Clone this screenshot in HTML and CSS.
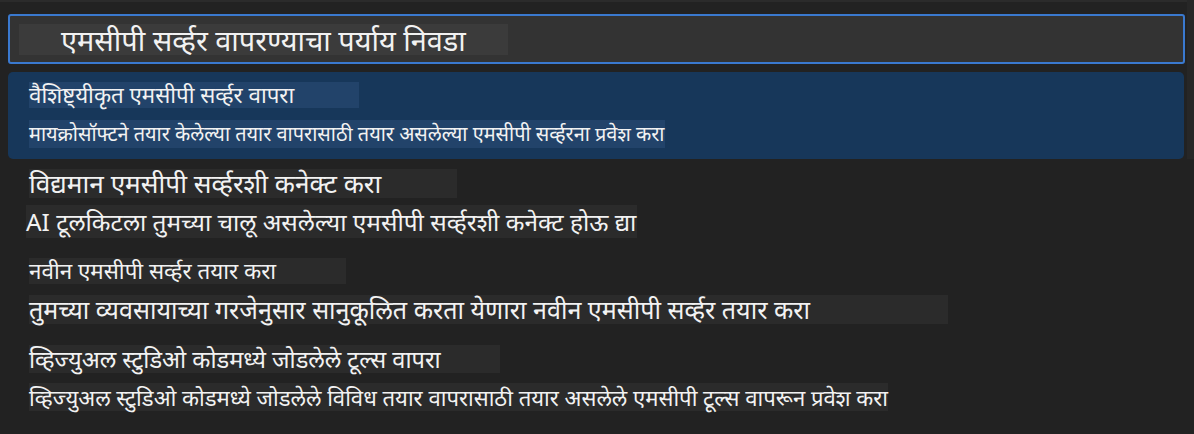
FILE: index.html
```html
<!DOCTYPE html>
<html lang="mr">
<head>
<meta charset="utf-8">
<title>एमसीपी सर्व्हर</title>
<link rel="stylesheet" href="styles.css">
</head>
<body>
<div class="panel">
  <div class="scroll-thumb"></div>
  <div class="input">
    <span class="hl hl-input">एमसीपी सर्व्हर वापरण्याचा पर्याय निवडा</span>
  </div>
  <ul class="list">
    <li class="item item-1 selected">
      <span class="line t1">वैशिष्ट्यीकृत एमसीपी सर्व्हर वापरा</span>
      <span class="line d1">मायक्रोसॉफ्टने तयार केलेल्या तयार वापरासाठी तयार असलेल्या एमसीपी सर्व्हरना प्रवेश करा</span>
    </li>
    <li class="item item-2">
      <span class="line t2">विद्यमान एमसीपी सर्व्हरशी कनेक्ट करा</span>
      <span class="line d2">AI टूलकिटला तुमच्या चालू असलेल्या एमसीपी सर्व्हरशी कनेक्ट होऊ द्या</span>
    </li>
    <li class="item item-3">
      <span class="line t3">नवीन एमसीपी सर्व्हर तयार करा</span>
      <span class="line d3">तुमच्या व्यवसायाच्या गरजेनुसार सानुकूलित करता येणारा नवीन एमसीपी सर्व्हर तयार करा</span>
    </li>
    <li class="item item-4">
      <span class="line t4">व्हिज्युअल स्टुडिओ कोडमध्ये जोडलेले टूल्स वापरा</span>
      <span class="line d4">व्हिज्युअल स्टुडिओ कोडमध्ये जोडलेले विविध तयार वापरासाठी तयार असलेले एमसीपी टूल्स वापरून प्रवेश करा</span>
    </li>
  </ul>
</div>
</body>
</html>
```
FILE: styles.css
```css
* { box-sizing: border-box; }
html, body {
  margin: 0;
  padding: 0;
  background: #222222;
}
body {
  font-family: "Noto Sans", "DejaVu Sans", sans-serif;
  color: #f2f2f2;
  width: 1194px;
  height: 434px;
  overflow: hidden;
}
.panel {
  position: relative;
  height: 434px;
  border-top: 2px solid #2b2b2b;
  padding: 12px 0 0 8px;
}
.scroll-thumb {
  position: absolute;
  top: -2px;
  right: 0;
  width: 7px;
  height: 159px;
  background: #272727;
}
.input {
  width: 1177px;
  height: 50px;
  border: 2px solid #3a79cf;
  border-radius: 3px;
  background: #333333;
  padding: 8px 0 0 9px;
}
.hl {
  display: block;
  white-space: nowrap;
}
.hl-input {
  width: 489px;
  height: 31px;
  background: #3b3b3b;
  padding-left: 42px;
  font-size: 28.9px;
  line-height: 31px;
}
.list {
  list-style: none;
  margin: 8px 0 0 0;
  padding: 0;
  width: 1176px;
}
.item {
  display: flex;
  flex-direction: column;
  align-items: flex-start;
  padding-left: 21px;
}
.line {
  display: block;
  white-space: nowrap;
  background: #2b2b2b;
}
.selected {
  background: #17375a;
  border-radius: 5px;
  height: 87px;
  padding-top: 10px;
}
.selected .line { background: #22436a; }

.t1 { width: 330px; height: 26px; line-height: 26px; font-size: 22.3px; }
.d1 { width: 636px; height: 28px; line-height: 28px; font-size: 19.9px; margin-top: 12px; }

.item-2 { padding-top: 10px; }
.t2 { width: 428px; height: 29px; line-height: 29px; font-size: 26.2px; }
.d2 { width: 611px; height: 33px; line-height: 33px; font-size: 24.4px; margin-top: 7px; margin-left: -3px; }

.item-3 { padding-top: 20px; }
.t3 { width: 317px; height: 26px; line-height: 26px; font-size: 22.4px; }
.d3 { width: 919px; height: 29px; line-height: 29px; font-size: 25.1px; margin-top: 11px; }

.item-4 { padding-top: 21px; }
.t4 { width: 471px; height: 28px; line-height: 28px; font-size: 23.6px; }
.d4 { width: 859px; height: 28px; line-height: 28px; font-size: 22.1px; margin-top: 10px; }
```
